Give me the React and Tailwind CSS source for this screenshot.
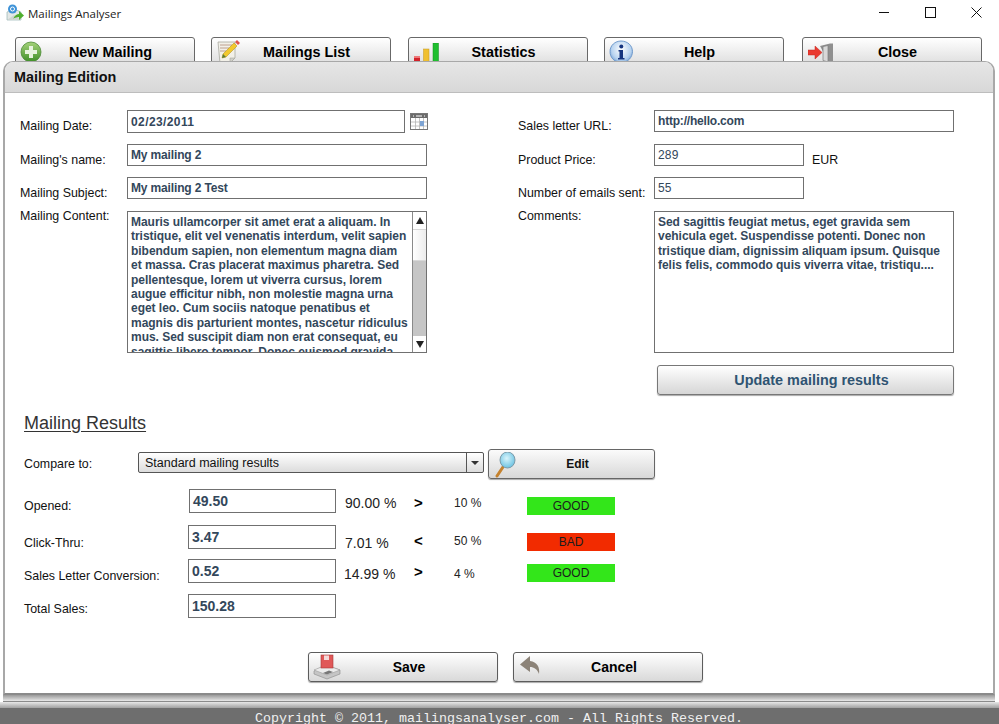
import React from 'react';

const AppIcon = () => (
  <svg width="18" height="18" viewBox="0 0 18 18">
    <path d="M1 8l7 -3 7 3v8H1z" fill="#e4e8e6" stroke="#8aa" strokeWidth="0.6" />
    <circle cx="6.5" cy="5" r="4.5" fill="#3f93d8" />
    <circle cx="6.5" cy="5" r="2" fill="none" stroke="#fff" strokeWidth="1" />
    <path d="M1 16l7 -5 7 5z" fill="#cfd6d2" />
    <path d="M7 15c2-4 4-5 6-5V7l5 4.5-5 4.5v-3c-2 0-4 .5-6 1.5z" fill="#4fae2e" />
  </svg>
);

const PlusIcon = () => (
  <svg width="22" height="22" viewBox="0 0 22 22">
    <defs>
      <linearGradient id="plusGreen" x1="0" y1="0" x2="0" y2="1">
        <stop offset="0" stopColor="#a5d27a" />
        <stop offset="1" stopColor="#3f8f28" />
      </linearGradient>
    </defs>
    <circle cx="11" cy="11" r="10" fill="url(#plusGreen)" stroke="#4b8a35" strokeWidth="0.8" />
    <path d="M9 5h4v4h4v4h-4v4H9v-4H5V9h4z" fill="#e8f3df" />
  </svg>
);

const ListIcon = () => (
  <svg width="24" height="26" viewBox="0 0 24 26">
    <path d="M1 3h17v16l-5 5H3z" fill="#f2f0e8" stroke="#a8a8a0" strokeWidth="0.8" />
    <path d="M3 6h12M3 9h9M3 12h6" stroke="#b08a7a" strokeWidth="0.8" />
    <path d="M13 24v-5h5z" fill="#cfcfc8" stroke="#a8a8a0" strokeWidth="0.6" />
    <path d="M5 19l1-4L17 4l3 3L9 18z" fill="#f2c82e" stroke="#a88a18" strokeWidth="0.5" />
    <path d="M5 19l1-4 3 3z" fill="#5a7a3a" />
    <path d="M18 3l2-2 3 3-2 2z" fill="#e0524a" />
  </svg>
);

const BarsIcon = () => (
  <svg width="26" height="20" viewBox="0 0 26 20">
    <rect x="1" y="13" width="6" height="7" fill="#d2222a" />
    <rect x="1" y="13" width="6" height="2" fill="#ee7a7a" />
    <rect x="10.5" y="6" width="5.5" height="14" fill="#f0c030" stroke="#c49a20" strokeWidth="0.5" />
    <rect x="20" y="0" width="5.5" height="20" fill="#1fbf2f" stroke="#159022" strokeWidth="0.5" />
  </svg>
);

const InfoIcon = () => (
  <svg width="25" height="26" viewBox="0 0 25 26">
    <defs>
      <radialGradient id="infoBlue" cx="0.5" cy="0.35" r="0.7">
        <stop offset="0" stopColor="#ffffff" />
        <stop offset="0.6" stopColor="#b9d4f0" />
        <stop offset="1" stopColor="#4f84c4" />
      </radialGradient>
    </defs>
    <path d="M12 1c6.500 0 11.500 4.500 11.500 10.500S18.500 22 15 22l-3 3-2-3C5 21.500 1 17.500 1 11.500S6 1 12 1z" fill="url(#infoBlue)" stroke="#5c8cc4" strokeWidth="0.8" />
    <circle cx="12.300" cy="6.500" r="2" fill="#16357f" />
    <path d="M9.500 10h4.500v8h1.500v1.500h-6.500V18h1.500v-6.500H9.500z" fill="#16357f" />
  </svg>
);

const DoorIcon = () => (
  <svg width="26" height="20" viewBox="0 0 26 20">
    <path d="M12 3l10-2.500h3V18h-5z" fill="#8f8f8f" />
    <path d="M15 3.500l5-1V19l-5-1.500z" fill="#d8d8d8" stroke="#7b7b7b" strokeWidth="0.7" />
    <path d="M0 7h7V3l7 6.500L7 16v-4H0z" fill="#ea3a30" stroke="#c02820" strokeWidth="0.5" />
  </svg>
);

const CalendarIcon = () => (
  <svg width="18" height="18" viewBox="0 0 18 18">
    <rect x="0.500" y="0.500" width="17" height="16" fill="#fff" stroke="#777" />
    <rect x="1" y="1" width="16" height="4" fill="#6b6b6b" />
    <path d="M3 3h1M6 3h6M14 3h1" stroke="#fff" />
    <path d="M1 9h16M1 13h16M5.500 5v11M9.500 5v11M13.500 5v11" stroke="#b5b5b5" strokeWidth="0.8" />
    <rect x="10" y="8" width="4" height="5" fill="#7ea4d4" />
  </svg>
);

const GlassIcon = () => (
  <svg width="22" height="28" viewBox="0 0 22 28">
    <defs>
      <radialGradient id="glassBlue" cx="0.45" cy="0.4" r="0.65">
        <stop offset="0" stopColor="#d8f4fb" />
        <stop offset="1" stopColor="#65bfe0" />
      </radialGradient>
    </defs>
    <path d="M8 15L2 24" stroke="#c5822e" strokeWidth="3" strokeLinecap="round" />
    <ellipse cx="12.500" cy="8" rx="7.500" ry="8" fill="url(#glassBlue)" stroke="#7d9aa8" strokeWidth="1" />
  </svg>
);

const SaveIcon = () => (
  <svg width="28" height="26" viewBox="0 0 28 26">
    <path d="M1 17l12-6 14 5v4l-13 5-13-5z" fill="#c5c5c5" stroke="#8a8a8a" strokeWidth="0.6" />
    <path d="M1 16l12-5 14 5-13 5z" fill="#ececec" stroke="#9a9a9a" strokeWidth="0.6" />
    <rect x="8" y="1" width="12" height="13" fill="#e05858" stroke="#a83a3a" strokeWidth="0.6" />
    <rect x="11" y="1.500" width="5" height="4.500" fill="#f4d8d8" />
    <path d="M10 19l6-2.500 4 1.500-6 2.500z" fill="#777" />
  </svg>
);

const BackIcon = () => (
  <svg width="24" height="22" viewBox="0 0 24 22">
    <path d="M11 1L1 9.500 11 17v-5c4 0 7 2 9 7 1-7-2-12-9-13z" fill="#8c8378" />
  </svg>
);

const ToolButton = ({ label, icon, iconClass, className }) => (
  <button className={`relative h-[30px] w-[180px] shrink-0 rounded-t-[3px] border border-[#686868] bg-gradient-to-b from-[#ffffff] to-[#dcdcdc] text-[14.4px] font-bold text-black ${className}`}>
    <span className={`absolute ${iconClass}`}>{icon}</span>
    <span className="block h-[28px] pl-[11px] text-center leading-[28px]">{label}</span>
  </button>
);

const ActionButton = ({ label, icon, iconClass }) => (
  <button className="relative h-[30px] w-[190px] rounded-[3px] border border-[#5c5c5c] bg-gradient-to-b from-[#ffffff] to-[#d9d9d9] text-[14px] font-bold text-black shadow-[0_1px_1px_#aaa]">
    <span className={`absolute ${iconClass}`}>{icon}</span>
    <span className="block pl-[12px] text-center">{label}</span>
  </button>
);

const Label = ({ children, className }) => (
  <div className={`shrink-0 text-[12.4px] leading-[14px] text-[#111] ${className}`}>{children}</div>
);

const Box = ({ children, className }) => (
  <div className={`shrink-0 border border-[#707070] bg-white pl-[3px] text-[12px] text-[#33475b] ${className}`}>{children}</div>
);

const ResultRow = ({ label, value, pct, sign, target, status, rowClass, labelClass, boxClass, pctClass, signClass, targetClass, badgeClass }) => (
  <div className={`flex items-start ${rowClass}`}>
    <Label className={labelClass}>{label}</Label>
    <Box className={`h-[24px] text-[14px] font-bold leading-[22px] text-[#2f4a63] ${boxClass}`}>{value}</Box>
    {pct && (
      <>
        <div className={`shrink-0 text-[14px] leading-[16px] text-[#222] ${pctClass}`}>{pct}</div>
        <div className={`w-[40px] shrink-0 text-[15px] font-bold leading-[16px] text-black ${signClass}`}>{sign}</div>
        <div className={`w-[73px] shrink-0 text-[12px] leading-[14px] text-[#222] ${targetClass}`}>{target}</div>
        <div className={`h-[18px] w-[88px] shrink-0 text-center text-[12px] leading-[18px] text-[#1c1c1c] ${status === 'GOOD' ? 'bg-[#33e61a]' : 'bg-[#f22b00]'} ${badgeClass}`}>{status}</div>
      </>
    )}
  </div>
);

const App = () => {
  return (
    <div className="flex h-[724px] w-[999px] flex-col overflow-hidden bg-white font-['Liberation_Sans',Arial,sans-serif]">
      {/* Title bar */}
      <div className="flex h-[37px] shrink-0 items-start">
        <div className="ml-[6px] mt-[4px]"><AppIcon /></div>
        <div className="ml-[4px] mt-[5px] font-['Open_Sans',sans-serif] text-[11.5px] leading-[17px] text-[#222]">Mailings Analyser</div>
        <div className="ml-auto mr-[17px] mt-[7px] flex items-start gap-[35px]">
          <svg width="11" height="11" viewBox="0 0 11 11"><path d="M0 5.500h10" stroke="#111" /></svg>
          <svg width="11" height="11" viewBox="0 0 11 11"><rect x="0.500" y="0.500" width="10" height="10" fill="none" stroke="#111" /></svg>
          <svg width="11" height="11" viewBox="0 0 11 11"><path d="M0.500 0.500l10 10M10.500 0.500l-10 10" stroke="#111" /></svg>
        </div>
      </div>

      {/* Toolbar, bottoms hidden behind the panel */}
      <div className="flex h-[24px] shrink-0 overflow-hidden pl-[15px]">
        <ToolButton label="New Mailing" icon={<PlusIcon />} iconClass="left-[4px] top-[3px]" />
        <ToolButton label="Mailings List" icon={<ListIcon />} iconClass="left-[5px] top-[1px]" className="ml-[16px]" />
        <ToolButton label="Statistics" icon={<BarsIcon />} iconClass="left-[4px] top-[5px]" className="ml-[17px]" />
        <ToolButton label="Help" icon={<InfoIcon />} iconClass="left-[4px] top-[2px]" className="ml-[16px]" />
        <ToolButton label="Close" icon={<DoorIcon />} iconClass="left-[5px] top-[5px]" className="ml-[18px]" />
      </div>

      {/* Main panel */}
      <div className="ml-[3px] h-[634px] w-[992px] shrink-0 overflow-hidden rounded-t-[10px] border-x-2 border-t border-b-2 border-x-[#a8a8a8] border-t-[#a8a8a8] border-b-[#8a8a8a] bg-white">
        <div className="h-[31px] border-b border-[#bdbdbd] bg-gradient-to-b from-[#e6e6e6] to-[#d8d8d8] pl-[9px] text-[14.4px] font-bold leading-[30px] text-[#111]">Mailing Edition</div>

        <div className="flex pl-[15px] pt-[17px]">
          {/* Left column */}
          <div className="w-[408px] shrink-0">
            <div className="flex h-[34px] items-start">
              <Label className="w-[107px] pt-[9px]">Mailing Date:</Label>
              <Box className="h-[23px] w-[278px] font-bold leading-[22px] tracking-[0.4px]">02/23/2011</Box>
              <div className="ml-[5px] mt-[3px]"><CalendarIcon /></div>
            </div>
            <div className="flex h-[33px] items-start">
              <Label className="w-[107px] pt-[9px]">Mailing's name:</Label>
              <Box className="h-[22px] w-[300px] font-bold leading-[20px] tracking-[-0.15px]">My mailing 2</Box>
            </div>
            <div className="flex h-[34px] items-start">
              <Label className="w-[107px] pt-[9px]">Mailing Subject:</Label>
              <Box className="h-[22px] w-[300px] font-bold leading-[20px] tracking-[-0.15px]">My mailing 2 Test</Box>
            </div>
            <div className="flex items-start">
              <Label className="-mt-[2px] w-[107px]">Mailing Content:</Label>
              <div className="flex h-[142px] w-[300px] border border-[#707070] bg-white">
                <div className="flex-1 overflow-hidden pl-[3px] pr-[3px] pt-[3px] text-[12px] font-bold leading-[14.4px] tracking-[-0.03px] text-[#33475b]">
                  Mauris ullamcorper sit amet erat a aliquam. In tristique, elit vel venenatis interdum, velit sapien bibendum sapien, non elementum magna diam et massa. Cras placerat maximus pharetra. Sed pellentesque, lorem ut viverra cursus, lorem augue efficitur nibh, non molestie magna urna eget leo. Cum sociis natoque penatibus et magnis dis parturient montes, nascetur ridiculus mus. Sed suscipit diam non erat consequat, eu sagittis libero tempor. Donec euismod gravida
                </div>
                <div className="flex w-[14px] shrink-0 flex-col border-l border-[#8a8a8a] bg-[#c6c6c6]">
                  <div className="flex h-[17px] items-center justify-center bg-white"><div className="h-0 w-0 border-x-[4px] border-b-[7px] border-x-transparent border-b-[#222]" /></div>
                  <div className="h-[32px] border-y border-[#d8d8d8] bg-gradient-to-r from-[#ffffff] to-[#ececec]" />
                  <div className="flex-1" />
                  <div className="flex h-[16px] items-center justify-center bg-white"><div className="h-0 w-0 border-x-[4px] border-t-[7px] border-x-transparent border-t-[#222]" /></div>
                </div>
              </div>
            </div>
          </div>

          {/* Right column */}
          <div className="ml-[90px] w-[436px] shrink-0">
            <div className="flex h-[34px] items-start">
              <Label className="w-[136px] pt-[9px]">Sales letter URL:</Label>
              <Box className="h-[22px] w-[300px] font-bold leading-[20px] tracking-[-0.2px]">http://hello.com</Box>
            </div>
            <div className="flex h-[33px] items-start">
              <Label className="w-[136px] pt-[9px]">Product Price:</Label>
              <Box className="h-[22px] w-[150px] leading-[20px] tracking-[0.2px] text-[#2a3a4a]">289</Box>
              <Label className="ml-[8px] pt-[9px]">EUR</Label>
            </div>
            <div className="flex h-[34px] items-start">
              <Label className="w-[136px] pt-[9px]">Number of emails sent:</Label>
              <Box className="h-[22px] w-[150px] leading-[20px] tracking-[0.2px] text-[#2a3a4a]">55</Box>
            </div>
            <div className="flex items-start">
              <Label className="-mt-[2px] w-[136px]">Comments:</Label>
              <Box className="h-[142px] w-[300px] pt-[3px] font-bold leading-[14.4px] tracking-[-0.03px]">
                Sed sagittis feugiat metus, eget gravida sem vehicula eget. Suspendisse potenti. Donec non tristique diam, dignissim aliquam ipsum. Quisque felis felis, commodo quis viverra vitae, tristiqu....
              </Box>
            </div>
            <button className="ml-[139px] mt-[12px] h-[30px] w-[297px] rounded-[3px] border border-[#777] bg-gradient-to-b from-[#ffffff] to-[#d6d6d6] pl-[12px] pt-[1px] text-[14.4px] font-bold text-[#2f5472] shadow-[0_1px_1px_#aaa]">
              Update mailing results
            </button>
          </div>
        </div>

        {/* Mailing results */}
        <div className="pl-[19px] pt-[18px]">
          <div className="text-[18px] leading-[21px] text-[#333] underline underline-offset-2">Mailing Results</div>
          <div className="mt-[15px] flex items-start">
            <Label className="w-[114px] pt-[8px]">Compare to:</Label>
            <div className="mt-[3px] flex h-[21px] w-[346px] shrink-0 items-center rounded-[2px] border border-[#555] bg-gradient-to-b from-[#ffffff] to-[#dcdcdc] pl-[6px] text-[12.5px] text-[#111]">
              <span className="flex-1 pt-[1px]">Standard mailing results</span>
              <span className="flex h-full w-[17px] items-center justify-center border-l border-[#555]">
                <span className="h-0 w-0 border-x-[4px] border-t-[4px] border-x-transparent border-t-[#333]" />
              </span>
            </div>
            <button className="relative ml-[4px] h-[30px] w-[167px] rounded-[3px] border border-[#666] bg-gradient-to-b from-[#fbfbfb] to-[#d8d8d8] pl-[12px] text-[12px] font-bold text-[#111] shadow-[0_1px_1px_#aaa]">
              <span className="absolute left-[6px] top-[2px]"><GlassIcon /></span>
              Edit
            </button>
          </div>

          <ResultRow label="Opened:" value="49.50" pct="90.00 %" sign=">" target="10 %" status="GOOD" rowClass="mt-[10px] h-[36px]" labelClass="w-[165px] pt-[10px]" boxClass="w-[147px]" pctClass="ml-[9px] w-[69px] pt-[6px]" signClass="pt-[6px]" targetClass="pt-[7px]" badgeClass="mt-[8px]" />
          <ResultRow label="Click-Thru:" value="3.47" pct="7.01 %" sign="<" target="50 %" status="BAD" rowClass="h-[34px]" labelClass="w-[164px] pt-[11px]" boxClass="w-[148px]" pctClass="ml-[9px] w-[69px] pt-[10px]" signClass="pt-[8px]" targetClass="pt-[9px]" badgeClass="mt-[8px]" />
          <ResultRow label="Sales Letter Conversion:" value="0.52" pct="14.99 %" sign=">" target="4 %" status="GOOD" rowClass="h-[35px]" labelClass="w-[164px] pt-[10px]" boxClass="w-[148px]" pctClass="ml-[8px] w-[70px] pt-[7px]" signClass="pt-[5px]" targetClass="pt-[8px]" badgeClass="mt-[5px]" />
          <ResultRow label="Total Sales:" value="150.28" rowClass="h-[34px]" labelClass="w-[164px] pt-[8px]" boxClass="w-[148px]" />
        </div>

        <div className="mt-[24px] flex gap-[15px] pl-[303px]">
          <ActionButton label="Save" icon={<SaveIcon />} iconClass="left-[4px] top-[1px]" />
          <ActionButton label="Cancel" icon={<BackIcon />} iconClass="left-[5px] top-[2px]" />
        </div>
      </div>

      {/* Stacked sheet below the panel */}
      <div className="ml-[3px] h-[7px] w-[992px] shrink-0 border-b border-[#8a8a8a] bg-gradient-to-b from-[#9a9a9a] to-[#e8e8e8]" />
      <div className="h-[6px] shrink-0 bg-gradient-to-b from-[#e8e8e8] to-[#a0a0a0]" />

      {/* Footer */}
      <div className="h-[16px] shrink-0 overflow-hidden bg-[#6e6e6e] pl-[255px] pt-[3px] font-['Liberation_Mono',monospace] text-[13.33px] leading-[15px] text-[#f0f0f0]">
        Copyright © 2011, mailingsanalyser.com - All Rights Reserved.
      </div>
    </div>
  );
};

export default App;
